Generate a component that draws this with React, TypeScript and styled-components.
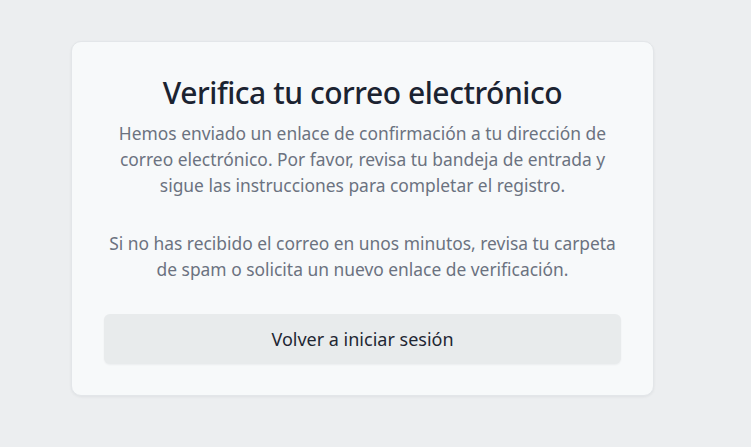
import React from 'react'
import styled, { createGlobalStyle } from 'styled-components'

const GlobalStyle = createGlobalStyle`
  html, body {
    margin: 0;
    padding: 0;
    background: #eceef0;
  }

  body {
    font-family: 'Noto Sans', 'Open Sans', sans-serif;
    -webkit-font-smoothing: antialiased;
  }
`

const Page = styled.main`
  min-height: 447px;
  box-sizing: border-box;
  padding: 41px 0 0 71px;
`

const Card = styled.section`
  width: 583px;
  box-sizing: border-box;
  padding: 31px 32px 31px;
  background: #f7f9fa;
  border: 1px solid #e3e6e9;
  border-radius: 10px;
  box-shadow: 0 1px 3px rgba(15, 23, 42, 0.06);
  display: flex;
  flex-direction: column;
  align-items: center;
  text-align: center;
`

const Title = styled.h1`
  margin: 0 0 7px;
  font-size: 30px;
  font-weight: 500;
  line-height: 40px;
  color: #1b2331;
  letter-spacing: -0.45px;
`

const Text = styled.p<{ $gap?: number }>`
  margin: 0;
  margin-top: ${(p) => p.$gap ?? 0}px;
  font-size: 17.4px;
  line-height: 26px;
  color: #6b7280;
`

const Button = styled.button`
  margin-top: 32px;
  width: 100%;
  height: 50px;
  border: none;
  border-radius: 6px;
  background: #e8ebec;
  box-shadow: 0 1px 2px rgba(15, 23, 42, 0.05);
  font-family: inherit;
  font-size: 18px;
  color: #1f2733;
  cursor: pointer;
`

export default function App() {
  return (
    <>
      <GlobalStyle />
      <Page>
        <Card>
          <Title>Verifica tu correo electrónico</Title>
          <Text>
            Hemos enviado un enlace de confirmación a tu dirección de correo
            electrónico. Por favor, revisa tu bandeja de entrada y sigue las
            instrucciones para completar el registro.
          </Text>
          <Text $gap={32}>
            Si no has recibido el correo en unos minutos, revisa tu carpeta de
            spam o solicita un nuevo enlace de verificación.
          </Text>
          <Button>Volver a iniciar sesión</Button>
        </Card>
      </Page>
    </>
  )
}
